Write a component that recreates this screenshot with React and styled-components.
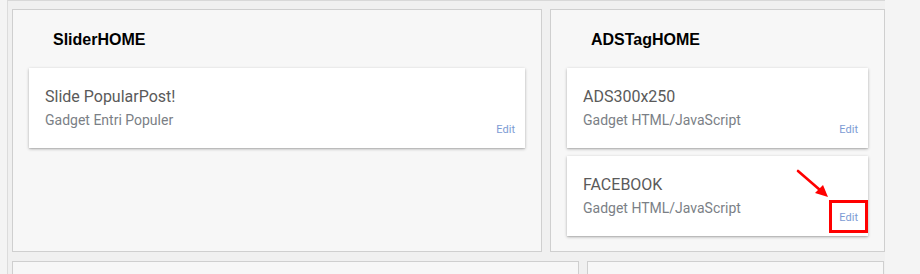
import React from "react";
import styled, { createGlobalStyle } from "styled-components";

const Global = createGlobalStyle`
  html, body { margin: 0; padding: 0; background: #f4f4f4; overflow: hidden; }
  body { font-family: Roboto, "Liberation Sans", Arial, sans-serif; }
`;

const Wrapper = styled.div`
  margin-left: 7px;
  width: 878px;
  height: 274px;
  box-sizing: border-box;
  background: #f0f0f0;
  border-top: 1px solid #d8d8d8;
  border-left: 1px solid #dcdcdc;
  padding: 8px 0 0 4px;
  display: flex;
  flex-direction: column;
  gap: 9px;
  overflow: hidden;
`;

const Row = styled.div`
  display: flex;
  gap: 8px;
  align-items: stretch;
  flex-shrink: 0;
`;

const Panel = styled.section`
  box-sizing: border-box;
  width: ${(p) => p.$w}px;
  height: ${(p) => (p.$h ? `${p.$h}px` : "auto")};
  background: #f7f7f7;
  border: 1px solid #cfcfcf;
  padding: 20px 16px 15px 16px;
  display: flex;
  flex-direction: column;
  gap: 8px;
`;

const PanelTitle = styled.h2`
  margin: 0 0 10px 24px;
  font-family: "Liberation Sans", Arial, sans-serif;
  font-weight: bold;
  font-size: 16px;
  line-height: 20px;
  color: #000;
`;

const Card = styled.div`
  position: relative;
  box-sizing: border-box;
  height: 80px;
  background: #fff;
  box-shadow: 0 1px 3px rgba(0, 0, 0, 0.28), 0 1px 1px rgba(0, 0, 0, 0.08);
  padding: 19px 10px 12px 16px;
  display: grid;
  grid-template-columns: 1fr auto;
`;

const CardText = styled.div`
  display: flex;
  flex-direction: column;
  gap: 4px;
`;

const CardTitle = styled.div`
  font-size: 16px;
  line-height: 20px;
  color: #5a5a5a;
`;

const CardSub = styled.div`
  font-size: 14px;
  line-height: 18px;
  color: #7b7f86;
`;

const EditLink = styled.a`
  align-self: end;
  font-size: 11px;
  line-height: 13px;
  color: #7c9bd4;
  text-decoration: none;
  cursor: pointer;
`;

const Highlight = styled.div`
  position: absolute;
  left: 262px;
  top: 44px;
  width: 39px;
  height: 33px;
  box-sizing: border-box;
  border: 3px solid #ff0000;
  pointer-events: none;
`;

const Arrow = styled.svg`
  position: absolute;
  left: 226px;
  top: 10px;
  overflow: visible;
  pointer-events: none;
`;

const Widget = ({ title, sub, marked }) => (
  <Card>
    <CardText>
      <CardTitle>{title}</CardTitle>
      <CardSub>{sub}</CardSub>
    </CardText>
    <EditLink>Edit</EditLink>
    {marked && (
      <>
        <Highlight />
        <Arrow width="40" height="36" viewBox="0 0 40 36">
          <line x1="5" y1="5" x2="27" y2="24" stroke="#ff0000" strokeWidth="2.6" strokeLinecap="round" />
          <polygon points="35,31 22,27 30,19" fill="#ff0000" />
        </Arrow>
      </>
    )}
  </Card>
);

export default function App() {
  return (
    <>
      <Global />
      <Wrapper>
        <Row>
          <Panel $w={530}>
            <PanelTitle>SliderHOME</PanelTitle>
            <Widget title="Slide PopularPost!" sub="Gadget Entri Populer" />
          </Panel>
          <Panel $w={335}>
            <PanelTitle>ADSTagHOME</PanelTitle>
            <Widget title="ADS300x250" sub="Gadget HTML/JavaScript" />
            <Widget title="FACEBOOK" sub="Gadget HTML/JavaScript" marked />
          </Panel>
        </Row>
        <Row>
          <Panel $w={567} $h={60} />
          <Panel $w={297} $h={60} />
        </Row>
      </Wrapper>
    </>
  );
}
